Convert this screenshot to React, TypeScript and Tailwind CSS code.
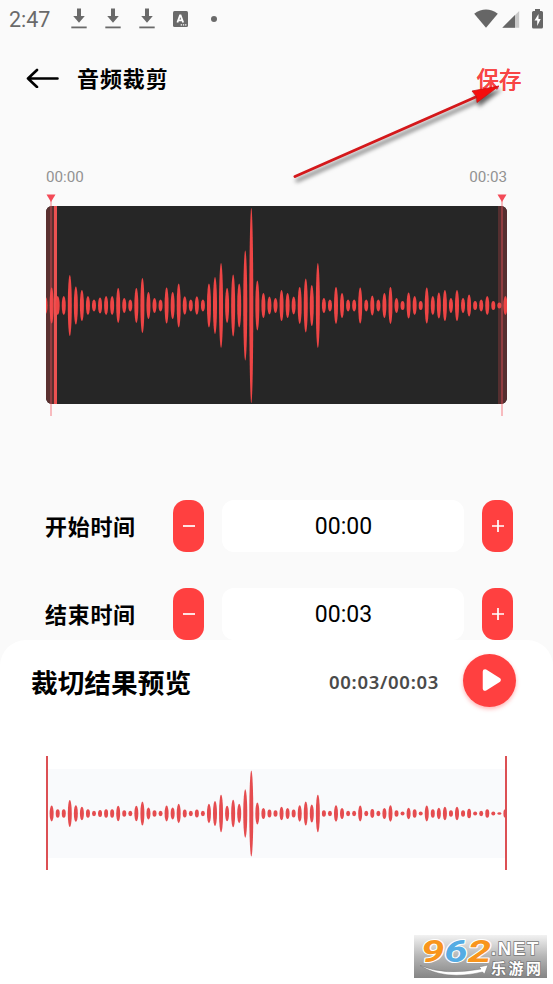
import React, { useState } from "react";

const SAMPLES = [
    8.5, 18, 9.5, 9.5, 30.5, 19, 15.5, 9.5, 6, 8, 9.5, 9.5, 17.5, 7.5, 6, 17.5, 27.5, 13.5, 7.5, 6, 18, 13.5, 22, 9.3, 6, 9.3, 6, 22, 28.5, 42.5, 17.5, 31, 22, 55, 97.5, 25, 12.5, 9, 7.5, 15.5, 12.5, 9, 18.5, 27, 20.5, 42.5, 7.5, 6,
    18.5, 12.5, 6, 6, 18, 6, 10, 6, 12.5, 18.5, 7.5, 4.5, 13, 9.5, 4.5, 18, 9.5, 13, 15.5, 7.5, 15.5, 7.5, 11, 4.5, 6, 9.5, 4.5, 3, 9.5,
];

const formatTime = (seconds: number) => "00:" + String(seconds).padStart(2, "0");

const Waveform = ({ height, scale, color }: { height: number; scale: number; color: string }) => (
    <svg className="block w-full" height={height} viewBox={"0 0 461 " + height}>
        {SAMPLES.map((sample, index) => (
            <ellipse key={index} cx={-0.4 + index * 6.05} cy={height / 2} rx={2} ry={sample * scale} fill={color} />
        ))}
    </svg>
);

const DownloadIcon = () => (
    <svg className="block" width="16" height="22" viewBox="0 0 16 22" fill="#6a6a6a">
        <path d="M6 0.500h4v7.500h3.800L8 14.700 2.200 8H6z" />
        <path d="M0.300 18.500h15.400v1.800H0.300z" />
    </svg>
);

const StatusBar = () => (
    <div className="flex h-[38px] items-center justify-between pr-2.5 pl-[9px]">
        <div className="flex items-center">
            <span className="w-[62px] pt-[2px] text-[21.500px] leading-none text-[#6a6a6a]">2:47</span>
            <div className="flex gap-[18px]">
                <DownloadIcon />
                <DownloadIcon />
                <DownloadIcon />
            </div>
            <svg className="ml-[18px]" width="15" height="16" viewBox="0 0 15 16">
                <rect width="15" height="16" rx="1.500" fill="#6a6a6a" />
                <path d="M4.400 11.500L7 4.500h0.600l2.600 7M5.300 9.300h4" fill="none" stroke="#fff" strokeWidth="1.800" />
                <path d="M7.700 13.200h1.300v1.300H7.700zM9.900 13.200h1.300v1.300H9.900zM12.100 13.200h1.300v1.300h-1.300z" fill="#fff" />
            </svg>
            <div className="ml-[23px] size-[6px] rounded-full bg-[#6a6a6a]"></div>
        </div>
        <div className="flex items-center">
            <svg width="24" height="20" viewBox="0 0 24 20">
                <path d="M12 18.700L0.200 4.700Q12 -3.700 23.800 4.700z" fill="#666" />
            </svg>
            <svg className="ml-1" width="18" height="20" viewBox="0 0 18 20">
                <path d="M0.300 18.700L17.200 2v16.700z" fill="#c9c9c9" />
                <path d="M0.300 18.700L13 6.100v12.600z" fill="#666" />
            </svg>
            <svg className="ml-3" width="11" height="20" viewBox="0 0 11 20">
                <path d="M3 0h5v2h1.500Q11 2 11 3.500v14.500Q11 19.500 9.500 19.500h-8Q0 19.500 0 18V3.500Q0 2 1.500 2H3z" fill="#666" />
                <path d="M6.500 5L2.500 11.500h2.700V17l3.500-7H6.500z" fill="#fff" />
            </svg>
        </div>
    </div>
);

const StepButton = ({ plus, onClick }: { plus?: boolean; onClick: () => void }) => (
    <button className="flex h-[52px] w-[31px] shrink-0 items-center justify-center rounded-[13px] bg-[#ff4040]" onClick={onClick}>
        <svg width="12" height="12" viewBox="0 0 12 12" stroke="#fff" strokeWidth="1.700">
            <path d={plus ? "M0 6h12M6 0v12" : "M0 6h12"} />
        </svg>
    </button>
);

const TimeRow = ({ label, value, onChange }: { label: string; value: number; onChange: (value: number) => void }) => (
    <div className="flex h-[52px] items-center pr-10 pl-[45px]">
        <span className="w-[128px] pt-1 text-[22px] leading-[52px] font-bold tracking-[0.700px] whitespace-nowrap text-black">{label}</span>
        <StepButton onClick={() => onChange(Math.max(0, value - 1))} />
        <div className="mx-[18px] flex h-[52px] flex-1 items-center justify-center rounded-xl bg-white pt-[3px] pl-px text-[23px] text-black">{formatTime(value)}</div>
        <StepButton plus onClick={() => onChange(value + 1)} />
    </div>
);

const Marker = ({ className }: { className: string }) => (
    <svg className={"absolute -top-[12.500px] " + className} width="10" height="222" viewBox="0 0 10 222">
        <path d="M0.500 0.500h9L5 8z" fill="#f34a57" />
        <path d="M5 7v215" stroke="#f4525c" strokeWidth="1" opacity="0.750" />
    </svg>
);

const Editor = () => (
    <div className="px-[46px]">
        <div className="flex justify-between text-[15.200px] leading-[18px] text-[#929292]">
            <span>00:00</span>
            <span>00:03</span>
        </div>
        <div className="relative mt-5 h-[197.500px]">
            <div className="relative h-full overflow-hidden rounded-md bg-[#262626]">
                <div className="absolute inset-y-0 left-0 w-[9px] bg-[#5a3030]"></div>
                <div className="absolute inset-y-0 right-0 w-[9px] bg-[#552f30]"></div>
                <div className="absolute inset-y-0 left-[8px] w-[3px] bg-[#ec5151]"></div>
                <div className="relative pt-px">
                    <Waveform height={197} scale={1} color="#ee4545" />
                </div>
            </div>
            <Marker className="left-0 -ml-[0.500px]" />
            <Marker className="right-0" />
        </div>
    </div>
);

const Preview = ({ end }: { end: number }) => {
    const [playing, setPlaying] = useState(false);

    return (
        <div className="relative h-[344.500px] rounded-t-[26px] bg-white">
            <div className="flex h-[67px] items-center pt-[14px] pr-[37px] pl-[31px]">
                <h2 className="pt-2 text-[26.700px] leading-[52px] font-bold whitespace-nowrap text-black">裁切结果预览</h2>
                <span className="mr-6 ml-auto pt-1 font-['Noto_Sans','Noto_Sans_CJK_SC',sans-serif] text-[18.500px] font-semibold tracking-[0.700px] text-[#4a4a4a]">{formatTime(end) + "/" + formatTime(end)}</span>
                <button className="flex size-[53px] items-center justify-center rounded-full bg-[#ff4040] shadow-[0_2px_4px_rgba(255,64,64,0.4)]" onClick={() => setPlaying(!playing)}>
                    {playing ? (
                        <svg width="18" height="22" viewBox="0 0 18 22">
                            <path d="M2 1h5v20H2zM11 1h5v20h-5z" fill="#fff" />
                        </svg>
                    ) : (
                        <svg className="ml-1" width="20" height="22" viewBox="0 0 20 22">
                            <path d="M3 2.500L16.500 11L3 19.500z" fill="#fff" stroke="#fff" strokeWidth="4.500" strokeLinejoin="round" />
                        </svg>
                    )}
                </button>
            </div>
            <div className="mx-[46px] mt-[49.500px] flex h-[114px] items-center">
                <div className="relative z-10 h-full w-[2px] bg-[#dc5054]"></div>
                <div className="-mx-[2px] h-[89px] flex-1 bg-[#f9fafc]">
                    <Waveform height={89} scale={0.44} color="#e54c4f" />
                </div>
                <div className="relative z-10 h-full w-[2px] bg-[#dc5054]"></div>
            </div>
            <Watermark />
        </div>
    );
};

const Watermark = () => (
    <svg className="absolute right-[6px] bottom-[6px]" width="133" height="43" viewBox="0 0 133 43">
        <defs>
            <linearGradient id="plate" x1="0" y1="0" x2="0" y2="1">
                <stop offset="0" stopColor="#f2f2f2" />
                <stop offset="0.500" stopColor="#b5b5b5" />
                <stop offset="1" stopColor="#858585" />
            </linearGradient>
        </defs>
        <rect width="133" height="43" fill="url(#plate)" />
        <path d="M6 30.500Q31 41 67 34L65 32L74 30L70.500 39L68.500 37Q31 46 6 30.500z" fill="#fff" stroke="#777" strokeWidth="0.500" />
        <text x="7" y="27" fontFamily="Roboto, sans-serif" fontWeight="bold" fontStyle="italic" fontSize="32" textLength="70" lengthAdjust="spacingAndGlyphs" stroke="#fff" strokeWidth="2" paintOrder="stroke" strokeLinejoin="round">
            <tspan fill="#f8951d">9</tspan>
            <tspan fill="#55ace4">6</tspan>
            <tspan fill="#f8951d">2</tspan>
        </text>
        <g fill="#fff" stroke="#777" strokeWidth="1.500" paintOrder="stroke" fontWeight="bold">
            <text x="77" y="20" fontFamily="'Liberation Sans', sans-serif" fontSize="18.500" letterSpacing="1.700">
                .NET
            </text>
            <text x="77" y="39" fontFamily="'Noto Sans CJK SC', sans-serif" fontSize="15" textLength="50">
                乐游网
            </text>
        </g>
    </svg>
);

const SaveHint = () => (
    <svg className="pointer-events-none absolute top-[70px] left-[285px] drop-shadow-[2px_4px_2px_rgba(0,0,0,0.6)]" width="225" height="120" viewBox="285 70 225 120">
        <path d="M295 176.500L478 96" stroke="#d4181b" strokeWidth="3" strokeLinecap="round" />
        <path d="M499 86L472 91L476.500 96.500L477 102.500z" fill="#f50d0d" stroke="#c81414" strokeWidth="0.800" />
    </svg>
);

const App = () => {
    const [start, setStart] = useState(0);
    const [end, setEnd] = useState(3);

    return (
        <div className="relative flex h-[984px] w-[553px] flex-col overflow-hidden bg-[#fafafa] font-[Roboto,'Noto_Sans_CJK_SC',sans-serif]">
            <StatusBar />

            <div className="flex h-[80px] items-center pr-[31.500px] pl-[26px]">
                <svg width="33" height="20" viewBox="0 0 33 20" fill="none" stroke="#000" strokeWidth="2.600" strokeLinecap="round" strokeLinejoin="round">
                    <path d="M31.500 10.500H2M11 2L2 10.500l9 8.500" />
                </svg>
                <h1 className="ml-[18px] pt-0.5 text-[22px] font-bold tracking-[0.900px] text-black">音频裁剪</h1>
                <button className="ml-auto pt-1.5 text-[22.500px] font-medium text-[#f84545] [text-shadow:0_0_0.500px_#f84545]">保存</button>
            </div>

            <div className="pt-[50px]">
                <Editor />
            </div>

            <div className="flex flex-1 flex-col gap-[35.500px] pt-[96.500px]">
                <TimeRow label="开始时间" value={start} onChange={setStart} />
                <TimeRow label="结束时间" value={end} onChange={setEnd} />
            </div>

            <Preview end={end} />
            <SaveHint />
        </div>
    );
};

export default App;
